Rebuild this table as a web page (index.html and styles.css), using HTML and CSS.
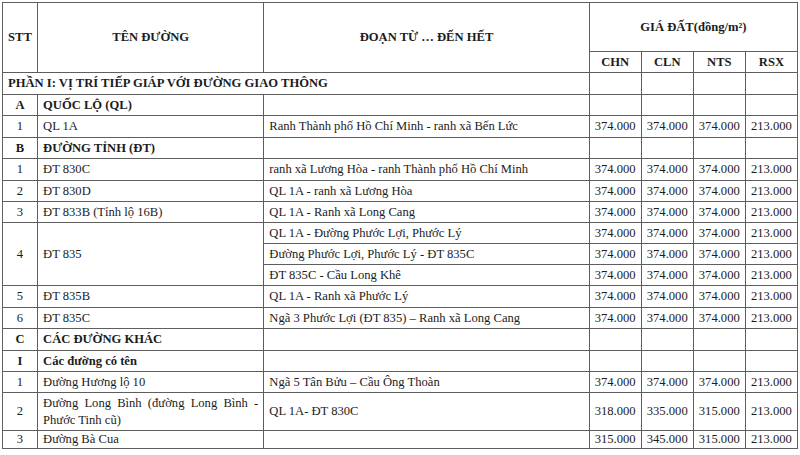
FILE: index.html
```html
<!DOCTYPE html>
<html lang="vi">
<head>
<meta charset="utf-8">
<title>Bảng giá đất</title>
<link rel="stylesheet" href="styles.css">
</head>
<body>
<table class="price-table">
  <colgroup>
    <col class="c-stt"><col class="c-name"><col class="c-seg">
    <col class="c-p"><col class="c-p"><col class="c-p"><col class="c-p">
  </colgroup>
  <thead>
    <tr class="h1">
      <th rowspan="2">STT</th>
      <th rowspan="2">TÊN ĐƯỜNG</th>
      <th rowspan="2">ĐOẠN TỪ … ĐẾN HẾT</th>
      <th colspan="4">GIÁ ĐẤT(đồng/m²)</th>
    </tr>
    <tr class="h2">
      <th>CHN</th><th>CLN</th><th>NTS</th><th>RSX</th>
    </tr>
  </thead>
  <tbody>
    <tr class="r22"><td colspan="3" class="part">PHẦN I: VỊ TRÍ TIẾP GIÁP VỚI ĐƯỜNG GIAO THÔNG</td><td></td><td></td><td></td><td></td></tr>
    <tr class="r21"><td class="num b">A</td><td class="txt b">QUỐC LỘ (QL)</td><td></td><td></td><td></td><td></td><td></td></tr>
    <tr class="r22"><td class="num">1</td><td class="txt">QL 1A</td><td class="txt">Ranh Thành phố Hồ Chí Minh - ranh xã Bến Lức</td><td class="p">374.000</td><td class="p">374.000</td><td class="p">374.000</td><td class="p">213.000</td></tr>
    <tr class="r21"><td class="num b">B</td><td class="txt b">ĐƯỜNG TỈNH (ĐT)</td><td></td><td></td><td></td><td></td><td></td></tr>
    <tr class="r22"><td class="num">1</td><td class="txt">ĐT 830C</td><td class="txt">ranh xã Lương Hòa - ranh Thành phố Hồ Chí Minh</td><td class="p">374.000</td><td class="p">374.000</td><td class="p">374.000</td><td class="p">213.000</td></tr>
    <tr class="r21"><td class="num">2</td><td class="txt">ĐT 830D</td><td class="txt">QL 1A - ranh xã Lương Hòa</td><td class="p">374.000</td><td class="p">374.000</td><td class="p">374.000</td><td class="p">213.000</td></tr>
    <tr class="r21"><td class="num">3</td><td class="txt">ĐT 833B (Tỉnh lộ 16B)</td><td class="txt">QL 1A - Ranh xã Long Cang</td><td class="p">374.000</td><td class="p">374.000</td><td class="p">374.000</td><td class="p">213.000</td></tr>
    <tr class="r21"><td class="num" rowspan="3">4</td><td class="txt" rowspan="3">ĐT 835</td><td class="txt">QL 1A - Đường Phước Lợi, Phước Lý</td><td class="p">374.000</td><td class="p">374.000</td><td class="p">374.000</td><td class="p">213.000</td></tr>
    <tr class="r21"><td class="txt">Đường Phước Lợi, Phước Lý - ĐT 835C</td><td class="p">374.000</td><td class="p">374.000</td><td class="p">374.000</td><td class="p">213.000</td></tr>
    <tr class="r21"><td class="txt">ĐT 835C - Cầu Long Khê</td><td class="p">374.000</td><td class="p">374.000</td><td class="p">374.000</td><td class="p">213.000</td></tr>
    <tr class="r22"><td class="num">5</td><td class="txt">ĐT 835B</td><td class="txt">QL 1A - Ranh xã Phước Lý</td><td class="p">374.000</td><td class="p">374.000</td><td class="p">374.000</td><td class="p">213.000</td></tr>
    <tr class="r21"><td class="num">6</td><td class="txt">ĐT 835C</td><td class="txt">Ngã 3 Phước Lợi (ĐT 835) – Ranh xã Long Cang</td><td class="p">374.000</td><td class="p">374.000</td><td class="p">374.000</td><td class="p">213.000</td></tr>
    <tr class="r22"><td class="num b">C</td><td class="txt b">CÁC ĐƯỜNG KHÁC</td><td></td><td></td><td></td><td></td><td></td></tr>
    <tr class="r21"><td class="num b">I</td><td class="txt b">Các đường có tên</td><td></td><td></td><td></td><td></td><td></td></tr>
    <tr class="r21"><td class="num">1</td><td class="txt">Đường Hương lộ 10</td><td class="txt">Ngã 5 Tân Bửu – Cầu Ông Thoàn</td><td class="p">374.000</td><td class="p">374.000</td><td class="p">374.000</td><td class="p">213.000</td></tr>
    <tr class="r38"><td class="num">2</td><td class="txt just">Đường Long Bình (đường Long Bình - Phước Tinh cũ)</td><td class="txt">QL 1A- ĐT 830C</td><td class="p">318.000</td><td class="p">335.000</td><td class="p">315.000</td><td class="p">213.000</td></tr>
    <tr class="r18"><td class="num">3</td><td class="txt">Đường Bà Cua</td><td></td><td class="p">315.000</td><td class="p">345.000</td><td class="p">315.000</td><td class="p">213.000</td></tr>
  </tbody>
</table>
</body>
</html>
```

FILE: styles.css
```css
html, body {
  margin: 0;
  padding: 0;
  background: #ffffff;
}

body {
  padding: 2px 0 0 2px;
  font-family: "Liberation Serif", "Times New Roman", serif;
  font-size: 12.6px;
  color: #1c1c1c;
}

.price-table {
  border-collapse: collapse;
  table-layout: fixed;
  width: 796px;
}

.c-stt { width: 35px; }
.c-name { width: 226px; }
.c-seg { width: 325px; }
.c-p { width: 52px; }

.price-table th,
.price-table td {
  border: 1px solid #5e5e5e;
  padding: 0;
  line-height: 15px;
  vertical-align: middle;
}

.price-table th {
  font-weight: bold;
  text-align: center;
}

.h1 { height: 49px; }
.h2 { height: 21px; }

.r18 { height: 18px; }
.r21 { height: 21px; }
.r22 { height: 22px; }
.r38 { height: 38px; }

.num { text-align: center; }
.txt { text-align: left; padding: 0 5px !important; }
.b { font-weight: bold; }
.part { font-weight: bold; padding: 0 5px !important; }
.p { text-align: center; }
.just { text-align: justify; line-height: 17px !important; }
```
